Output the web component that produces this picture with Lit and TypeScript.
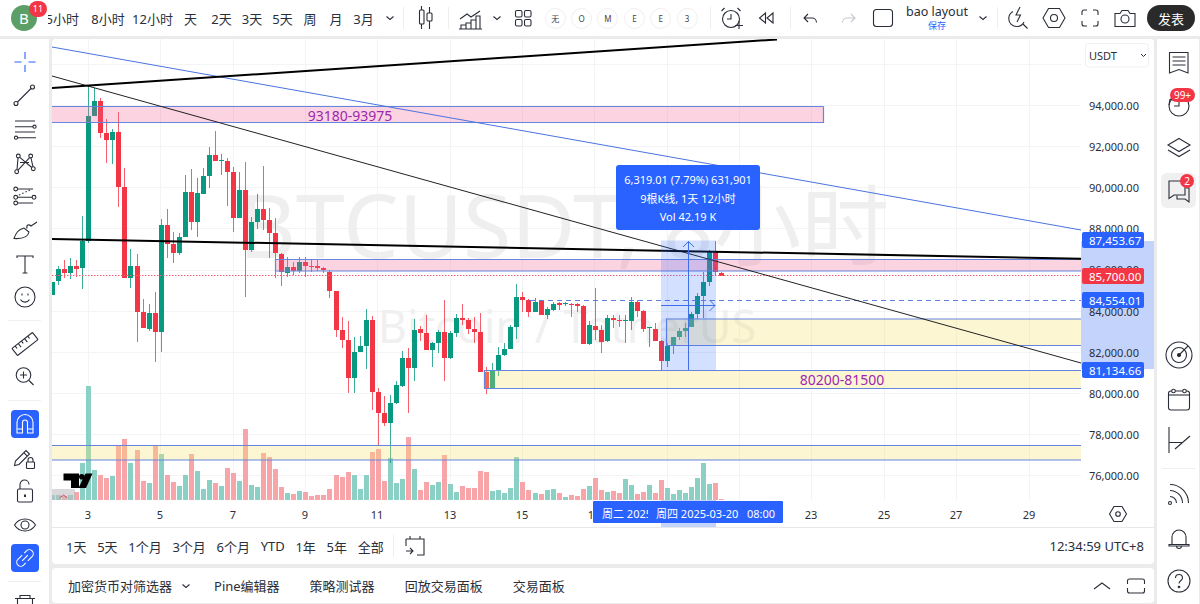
import { LitElement, html, css, svg } from 'lit';
import { customElement } from 'lit/decorators.js';

// [green?, bodyTop, bodyBottom, wickTop, wickBottom] in page pixels
const CANDLES: number[][] = [
  [1,282,295,282,295],[1,269,281,266,285],[0,269,273,260,278],[1,266,273,258,279],[0,266,269,260,277],
  [1,241,268,216,289],[1,116,241,86,243],[1,101,116,88,116],[0,101,133,98,138],[0,133,140,119,163],
  [1,132,140,129,164],[0,132,187,112,207],[0,187,278,168,278],[1,266,278,249,288],[0,266,312,254,342],
  [0,312,328,299,328],[1,313,329,304,331],[0,313,332,292,362],[1,225,332,219,352],[0,225,244,209,258],
  [0,244,253,232,263],[1,237,253,233,255],[1,192,237,175,237],[0,192,222,169,230],[1,193,222,178,237],
  [1,176,194,168,194],[1,155,176,147,188],[0,155,161,131,161],[1,160,161,154,175],[0,161,172,158,206],
  [0,172,218,167,232],[1,190,218,172,218],[0,190,250,162,297],[1,222,250,217,252],[1,209,222,194,229],
  [0,209,220,166,230],[0,220,233,208,258],[0,233,253,218,278],[0,254,272,253,286],[1,267,273,257,277],
  [0,267,271,262,275],[1,262,271,257,273],[0,262,266,257,277],[0,266,267,260,272],[0,266,268,260,271],
  [0,268,270,267,273],[0,272,291,270,298],[0,291,330,291,337],[0,330,340,317,348],[0,340,378,321,393],
  [1,352,378,337,393],[1,346,352,336,352],[1,320,346,309,369],[0,320,392,316,410],[0,392,413,388,445],
  [0,413,423,396,426],[1,403,423,395,463],[1,385,403,381,404],[1,358,386,351,387],[0,358,368,348,413],
  [1,330,368,319,381],[0,329,333,326,341],[0,333,350,315,350],[1,343,350,342,367],[1,332,343,330,353],
  [0,332,358,300,381],[1,333,358,331,359],[1,318,333,314,337],[0,318,320,304,325],[0,320,329,318,334],
  [0,329,332,317,343],[0,332,372,313,372],[0,372,389,367,394],[1,371,389,363,389],[1,355,370,347,376],
  [1,349,355,343,356],[1,327,349,325,349],[1,297,327,284,339],[0,297,300,292,312],[0,300,312,299,317],
  [1,302,312,298,312],[0,301,315,300,315],[1,309,315,307,319],[1,304,310,302,311],[0,303,305,302,310],
  [1,303,304,302,306],[0,304,305,303,317],[0,304,306,303,312],[0,306,344,305,344],[1,325,344,321,345],
  [0,326,330,288,340],[0,330,342,325,353],[1,318,341,315,342],[0,318,320,315,328],[0,320,321,315,327],
  [1,320,321,315,343],[1,302,321,297,330],[0,302,311,300,317],[0,311,329,310,332],[1,327,328,327,347],
  [0,329,341,323,341],[0,341,361,340,370],[1,346,361,343,367],[1,337,345,337,354],[1,331,337,328,340],
  [1,328,331,323,337],[1,314,327,312,327],[1,296,314,293,319],[1,282,296,272,318],[1,251,282,250,286],
  [0,252,272,241,275],[0,273,276,272,276],
];

// volume bar tops, in 3x crop units above the y=420 line
const VOL: number[] = [
  225,225,228,224,217,128,-102,150,165,174,168,78,57,130,90,183,190,78,103,165,187,197,165,102,152,208,180,
  190,197,145,160,182,28,195,202,100,112,148,200,218,221,213,215,228,226,225,207,165,170,155,166,208,165,95,
  88,182,115,188,177,52,148,210,187,195,187,105,192,215,198,205,204,153,156,212,210,218,203,111,186,210,219,
  221,210,208,220,232,226,228,207,197,174,210,216,212,218,178,196,223,215,196,218,180,205,223,209,218,200,
  175,128,191,190,237,
];

const GRID_X = [88, 160, 233, 305, 377, 450, 522, 594, 667, 739, 811, 884, 956, 1029];
const GRID_Y = [64, 105, 146, 187, 228, 270, 311, 352, 393, 434, 475];
const PRICES: [string, number][] = [
  ['94,000.00', 105], ['92,000.00', 146], ['90,000.00', 187], ['88,000.00', 228], ['86,000.00', 269],
  ['84,000.00', 311], ['82,000.00', 352], ['80,000.00', 393], ['78,000.00', 434], ['76,000.00', 475],
];
const DAYS: [string, number][] = [
  ['3', 88], ['5', 160], ['7', 233], ['9', 305], ['11', 377], ['13', 450], ['15', 522], ['17', 594],
  ['23', 811], ['25', 884], ['27', 956], ['29', 1029],
];

const xOf = (i: number) => Math.round(52.1 + 6.03 * i);

const ICONS: Record<string, unknown> = {
  cross: svg`<path d="M3.5 14h7M17.5 14h7M14 4v7M14 17v7"/>`,
  line: svg`<circle cx="5" cy="21.5" r="2"/><circle cx="21.5" cy="5" r="2"/><path d="M6.5 20L20 6.5"/>`,
  fib: svg`<path d="M4 6h20M4 11.7h18M4 17h20M7 22.7h18"/><circle cx="23.5" cy="11.7" r="1.6"/><circle cx="5" cy="22.7" r="1.6"/>`,
  pattern: svg`<circle cx="7.3" cy="7" r="1.9"/><circle cx="19.7" cy="7" r="1.9"/><circle cx="5.7" cy="22.7" r="1.9"/><circle cx="22.3" cy="19.7" r="1.9"/><path d="M7 9L6 20.8M8.8 8.3L20.8 18.5M18.6 8.6L7 21.2M20 9L22 17.8M9 13.5h9"/>`,
  fibch: svg`<circle cx="4.7" cy="7" r="1.9"/><circle cx="4.7" cy="15.3" r="1.9"/><circle cx="4.7" cy="21" r="1.9"/><circle cx="23" cy="15.3" r="1.9"/><path d="M6.6 7H22M6.6 15.3H21M6.6 21H22"/><path d="M8 13l11-5" stroke-dasharray="1.5 2"/>`,
  brush: svg`<path d="M3 22.5C5 17 7 13.5 13 12l5 4c-1 5-7 7-15 6.500z"/><path d="M16 12.500c-1-4 2-4.500 4-2.500l6-4"/>`,
  text: svg`<path d="M6 8V6h16v2M14 6v17M11.500 23h5"/>`,
  smile: svg`<circle cx="14" cy="14" r="10"/><path d="M9.500 16.500c2 3.500 7 3.500 9 0"/><path d="M11 10.500v2M17 10.500v2"/>`,
  ruler: svg`<g transform="rotate(-38 14 14)"><rect x="1" y="9.500" width="26" height="9" rx="0.500"/><path d="M5 9.500v3M9 9.500v4.500M13 9.500v3M17 9.500v4.500M21 9.500v3"/></g>`,
  zoom: svg`<circle cx="12.500" cy="12" r="7.300"/><path d="M12.500 8.500v7M9 12h7M18 17.500l4.500 4.500"/>`,
  magnet: svg`<path d="M6 23V12.500a8 8 0 0 1 16 0V23h-5.500V12.500a2.500 2.500 0 0 0-5 0V23zM6 19h5.500M16.500 19H22"/>`,
  pencil: svg`<path d="M3.500 21.500l1-4.500L15 6.500l3.500 3.500L8 20.500zM12.800 8.700l3.500 3.500"/><rect x="15.500" y="18" width="8" height="6.500" rx="0.800"/><path d="M17 18v-2a2.500 2.500 0 0 1 5 0v2"/>`,
  lock: svg`<rect x="6.500" y="12" width="15" height="13" rx="1.500"/><path d="M9 12V7.500a4.500 4.500 0 0 1 9 0"/><path d="M14 17.500v2.500" stroke-width="2"/>`,
  eye: svg`<path d="M3.500 14c5-8 16-8 21 0-5 8-16 8-21 0z"/><circle cx="14" cy="14" r="4"/>`,
  link: svg`<g transform="rotate(-45 14 14)"><path d="M14 10H8a4 4 0 0 0 0 8h3M14 18h6a4 4 0 0 0 0-8h-3"/><path d="M10 14h8"/></g>`,
  trash: svg`<path d="M9 7V4.500h10V7M4 7.500h20M6.500 8v16h15V8"/>`,
  watch: svg`<path d="M4.500 25V4.500H23V25l-9-3.500zM7.500 9h13M7.500 13h13M7.500 17h13"/>`,
  history: svg`<path d="M5 8l-1 6M5 8l5 2"/><circle cx="14" cy="15" r="10"/><path d="M14 10v5h-5"/>`,
  layers: svg`<path d="M14 4.500l11 6.500-11 6.500L3 11zM3 16l11 6.500L25 16"/>`,
  chat: svg`<path d="M4 5h16v14H9l-5 3.500z"/><path d="M21 12h3v14l-4-3H12v-3.500"/>`,
  gauge: svg`<circle cx="14" cy="14" r="13"/><circle cx="14" cy="14" r="7.500"/><circle cx="14" cy="14" fill="#222" r="1.500"/><path d="M14 14l9-9"/>`,
  calendar: svg`<rect x="3.500" y="5" width="21" height="19" rx="2.500"/><path d="M3.500 9h21"/><circle cx="8.500" cy="5" r="1.800" fill="#fff"/><circle cx="19.500" cy="5" r="1.800" fill="#fff"/>`,
  strat: svg`<path d="M4 1v26M4 16.500h13M10 23l15-13"/>`,
  rss: svg`<circle cx="5" cy="22" r="1.500"/><path d="M5 15.500a6.500 6.500 0 0 1 6.500 6.500M5 9.500a12.500 12.500 0 0 1 12.500 12.500M5 3.500A18.500 18.500 0 0 1 23.500 22"/>`,
  bell: svg`<path d="M7 20v-7a7 7 0 0 1 14 0v7M4 20.500h20v1.500H4zM11.500 22a2.500 2.500 0 0 0 5 0"/>`,
  help: svg`<circle cx="14" cy="14" r="11"/><path d="M10.500 11a3.500 3.500 0 0 1 7 0c0 2.500-3.500 2.500-3.500 5.500"/><circle cx="14" cy="20" r="0.800"/>`,
  candle: svg`<path d="M9.500 2v4M9.500 20v5M17.500 3v6M17.500 17v8"/><rect x="7.500" y="6" width="4.500" height="14" rx="1"/><rect x="15" y="9" width="5" height="8" rx="1"/>`,
  ind: svg`<path d="M4 15l7-5 4 3 9-6"/><path d="M3 25h23M5 25v-4h5v4M10 25v-6h5v6M15 25V16h5v9M20 25v-13h4v13"/>`,
  grid: svg`<rect x="6.500" y="6.500" width="6.500" height="6.500" rx="1.500"/><rect x="15.500" y="6.500" width="6.500" height="6.500" rx="1.500"/><rect x="6.500" y="15.500" width="6.500" height="6.500" rx="1.500"/><rect x="15.500" y="15.500" width="6.500" height="6.500" rx="1.500"/>`,
  alarm: svg`<circle cx="13" cy="15" r="8.500"/><path d="M13 10v5H9M3.500 7l3-3M19.500 4l3 3M21 17v8M17 21.500h8"/>`,
  rewind: svg`<path d="M12.500 9l-6 5 6 5zM20 9l-6 5 6 5z"/>`,
  undo: svg`<path d="M10 10l-4 4 4 4M6 14h8a4.500 4.500 0 0 1 4.500 4.500"/>`,
  redo: svg`<path d="M18 10l4 4-4 4M22 14h-8a4.500 4.500 0 0 0-4.500 4.500"/>`,
  square: svg`<rect x="4.500" y="5.500" width="19" height="17" rx="3"/>`,
  bolt: svg`<path d="M16 3l-4 8h4.500l-3.500 7M9 7.500a8 8 0 1 0 11 10.500M18.500 19.500l5 5"/>`,
  hex: svg`<path d="M8.500 4.500h11L25 14l-5.500 9.500h-11L3 14z"/><circle cx="14" cy="14" r="3.500"/>`,
  full: svg`<path d="M6 11V8a2 2 0 0 1 2-2h3M17 6h3a2 2 0 0 1 2 2v3M22 17v3a2 2 0 0 1-2 2h-3M11 22H8a2 2 0 0 1-2-2v-3"/>`,
  camera: svg`<path d="M4 9.500h5l2-3h6l2 3h5v13H4z"/><circle cx="14" cy="15" r="4"/>`,
  replay: svg`<path d="M5 7h18v16h-7M5 7v7M5 19h7M9 16l3 3-3 3M9 4v3M19 4v3"/>`,
  up: svg`<path d="M6 17l8-6 8 6"/>`,
  frame: svg`<path d="M5.500 12V9a2 2 0 0 1 2-2h13a2 2 0 0 1 2 2v3M22.500 16v3a2 2 0 0 1-2 2h-13a2 2 0 0 1-2-2v-3"/>`,
  chev: svg`<path d="M10.500 12.500l3.500 3 3.500-3"/>`,
};

const icon = (name: string) => html`<svg class="ic" viewBox="0 0 28 28">${ICONS[name]}</svg>`;

// top bar items, widths are the slots of the reference's toolbar
type TopItem = { w: number; t?: string; i?: string; sep?: boolean; c?: string; dim?: boolean };
const TOP: TopItem[] = [
  { w: 24, i: 'chev' },
  { w: 3, sep: true },
  { w: 42, i: 'candle' },
  { w: 3, sep: true },
  { w: 40, i: 'ind' },
  { w: 14, i: 'chev' },
  { w: 38, i: 'grid' },
  { w: 26.4, c: '无' }, { w: 26.4, c: 'O' }, { w: 26.4, c: 'M' }, { w: 26.4, c: 'E' }, { w: 26.4, c: 'E' }, { w: 26.4, c: '3' },
  { w: 19.6, sep: true },
  { w: 24, i: 'alarm' },
  { w: 46, i: 'rewind' },
  { w: 1, sep: true },
  { w: 42, i: 'undo' },
  { w: 28, i: 'redo', dim: true },
  { w: 44, i: 'square' },
];
const TOP_END: TopItem[] = [
  { w: 28, i: 'chev' },
  { w: 1, sep: true },
  { w: 40, i: 'bolt' },
  { w: 32, i: 'hex' },
  { w: 40, i: 'full' },
  { w: 30, i: 'camera' },
];
const FRAMES: [string, number][] = [
  ['5小时', 37], ['8小时', 46], ['12小时', 43], ['天', 33], ['2天', 29], ['3天', 32], ['5天', 29], ['周', 26], ['月', 26], ['3月', 29],
];

@customElement('app-root')
export class AppRoot extends LitElement {
  static override styles = css`
    :host {
      display: block;
      width: 1200px;
      height: 604px;
      overflow: hidden;
      background: #ebebec;
      font-family: "Noto Sans", "Noto Sans CJK SC", sans-serif;
      font-size: 13px;
      color: #2a2e39;
    }
    .ic {
      width: 28px;
      height: 28px;
      fill: none;
      stroke: #2a2e39;
      stroke-width: 1.100;
      flex-shrink: 0;
      overflow: visible;
    }

    .top {
      height: 36px;
      background: #fff;
      display: flex;
      align-items: center;
      position: relative;
    }
    .avatar-wrap {
      width: 48px;
      height: 36px;
      flex-shrink: 0;
      position: relative;
    }
    .avatar {
      position: absolute;
      left: 11px;
      top: 5px;
      width: 26px;
      height: 26px;
      border-radius: 50%;
      background: #5c9f66;
      color: #fff;
      font-size: 15px;
      display: flex;
      align-items: center;
      justify-content: center;
    }
    .badge-11 {
      position: absolute;
      left: 29px;
      top: 1px;
      width: 18px;
      height: 16px;
      border-radius: 8px;
      background: #f23645;
      color: #fff;
      font-size: 9px;
      line-height: 16px;
      text-align: center;
    }
    .slot {
      height: 36px;
      flex-shrink: 0;
      display: flex;
      align-items: center;
      justify-content: center;
      overflow: hidden;
      white-space: nowrap;
    }
    .slot.first {
      justify-content: flex-end;
      padding-right: 6px;
      box-sizing: border-box;
    }
    .slot.dim .ic { stroke: #c4c7cf; }
    .sep-v {
      width: 1px;
      height: 22px;
      background: #eeeeef;
    }
    .circle {
      width: 21px;
      height: 21px;
      border-radius: 50%;
      border: 1px solid #efefef;
      box-sizing: border-box;
      font-size: 8px;
      line-height: 19px;
      text-align: center;
      color: #444;
    }
    .layout {
      width: 64px;
      flex-shrink: 0;
      text-align: center;
      line-height: 1;
      white-space: nowrap;
    }
    .layout-name { font-size: 12.500px; line-height: 17px; margin-top: -3px; }
    .layout-save { font-size: 9px; line-height: 11px; color: #2962ff; }
    .publish {
      margin-left: 7px;
      width: 48px;
      height: 26px;
      border-radius: 13px;
      background: #2a2a2a;
      color: #fff;
      display: flex;
      align-items: center;
      justify-content: center;
      font-size: 13px;
    }

    .main {
      display: flex;
      gap: 3px;
      height: 565px;
      margin-top: 3px;
    }
    .left {
      width: 49px;
      background: #fff;
      display: flex;
      flex-direction: column;
      align-items: center;
      padding-top: 6.200px;
      box-sizing: border-box;
      overflow: hidden;
      flex-shrink: 0;
    }
    .tool {
      height: 33.600px;
      width: 100%;
      display: flex;
      align-items: center;
      justify-content: center;
      flex-shrink: 0;
    }
    .tool .ic.blue { stroke: #2962ff; }
    .on {
      width: 28px;
      height: 28px;
      background: #2962ff;
      border-radius: 4px;
      display: flex;
    }
    .on .ic { stroke: #fff; }
    .sep-h {
      width: 33px;
      height: 1px;
      background: #efefef;
      margin: 6px 0;
      flex-shrink: 0;
    }

    .center {
      width: 1102px;
      display: flex;
      flex-direction: column;
      gap: 4px;
    }
    .chart {
      height: 525px;
      background: #fff;
      border-radius: 4px;
      overflow: hidden;
    }
    .chart svg.plot {
      display: block;
      width: 1102px;
      height: 488px;
      font-family: "Noto Sans", "Noto Sans CJK SC", sans-serif;
    }
    .gridl { stroke: #f3f4f6; stroke-width: 1; }
    .wm { fill: #efeff0; font-size: 88px; text-anchor: middle; dominant-baseline: central; }
    .wm2 { fill: #f0f0f1; font-size: 45px; text-anchor: middle; dominant-baseline: central; }
    .zone { font-size: 14px; fill: #9c27b0; text-anchor: middle; dominant-baseline: central; }
    .tick { font-size: 11px; fill: #2a2e39; dominant-baseline: central; }
    .day { font-size: 11px; fill: #2a2e39; text-anchor: middle; dominant-baseline: central; }
    .lab { font-size: 11.500px; fill: #fff; dominant-baseline: central; }
    .tip { font-size: 11px; fill: #fff; text-anchor: middle; dominant-baseline: central; }
    .tip.start { text-anchor: start; }
    .usdt { font-size: 11px; fill: #2a2e39; dominant-baseline: central; }
    .crisp { shape-rendering: crispEdges; }

    .range {
      height: 37px;
      border-top: 1px solid #e8e8ea;
      box-sizing: border-box;
      display: flex;
      align-items: center;
      padding: 0 10px 0 14px;
      gap: 10.700px;
    }
    .range-sep { width: 1px; height: 22px; background: #eeeeef; margin-left: -1px; }
    .range .ic { margin-left: -4px; }
    .clock { margin-left: auto; }

    .tabs {
      height: 35px;
      background: #fff;
      border-radius: 4px;
      display: flex;
      align-items: center;
      padding: 0 4px 0 16px;
      gap: 30px;
    }
    .tabs .first { display: flex; align-items: center; }
    .tabs .first .ic { margin: 0 -16px 0 0; }
    .tabs .end { margin-left: auto; display: flex; gap: 6px; }

    .right {
      width: 42px;
      background: #fff;
      display: flex;
      flex-direction: column;
      align-items: center;
      overflow: hidden;
      position: relative;
      flex-shrink: 0;
    }
    .rt {
      width: 35px;
      height: 35px;
      margin-left: 1px;
      border-radius: 6px;
      display: flex;
      align-items: center;
      justify-content: center;
      flex-shrink: 0;
      position: relative;
    }
    .rt.active { background: #f0f0f1; }
    .r-list { margin-top: 5.500px; }
    .r-gap-10 { margin-top: 10px; }
    .r-gap-8 { margin-top: 8px; }
    .r-gap-7 { margin-top: 7px; }
    .r-gap-5 { margin-top: 5px; }
    .r-gap-131 { margin-top: 130px; }
    .r-sep { width: 33px; height: 1px; background: #efefef; margin: 10px 0 9px; flex-shrink: 0; }
    .pill {
      position: absolute;
      background: #f23645;
      color: #fff;
      font-size: 10px;
      line-height: 14px;
      text-align: center;
      border-radius: 7px;
    }
    .p99 { left: 9px; top: 0.500px; width: 25px; height: 14px; }
    .p2 { left: 19px; top: 1px; width: 14px; height: 14px; }
  `;

  private plot() {
    return svg`
      ${GRID_X.map((x) => svg`<line class="gridl crisp" x1=${x} x2=${x} y1="39" y2="500"/>`)}
      ${GRID_Y.map((y) => svg`<line class="gridl crisp" x1="52" x2="1081" y1=${y} y2=${y}/>`)}
      <text class="wm" x="564" y="224">BTCUSDT, 8小时</text>
      <text class="wm2" x="567" y="325">Bitcoin / TetherUS</text>
      ${VOL.map((z, i) => {
        const top = 420 + z / 3;
        const col = CANDLES[i][0] ? '#8ad0c4' : '#f8a5a9';
        return svg`<rect class="crisp" x=${xOf(i) - 2} y=${top} width="5" height=${500 - top} fill=${col}/>`;
      })}
      ${CANDLES.map(([g, t, b, hi, lo], i) => {
        const col = g ? '#089981' : '#f23645';
        const x = xOf(i);
        return svg`<rect class="crisp" x=${x} y=${hi} width="1" height=${lo - hi} fill=${col} opacity="0.8"/>
          <rect class="crisp" x=${x - 2} y=${t} width="5" height=${Math.max(b - t, 1)} fill=${col}/>`;
      })}
      ${this.drawings()}
      ${this.measure()}
      ${this.axis()}
      ${this.logo()}
    `;
  }

  private box(x: number, y1: number, y2: number, w: number, fill: string) {
    return svg`
      <rect x=${x} y=${y1} width=${w} height=${y2 - y1} fill=${fill}/>
      <path d="M${x + w} ${y1}H${x}V${y2}H${x + w}${x + w < 1081 ? `V${y1}` : ''}" fill="none" stroke="#6785de" stroke-width="1.200"/>`;
  }

  private drawings() {
    const pink = 'rgba(240,98,146,0.28)';
    const yellow = 'rgba(250,225,110,0.3)';
    return svg`
      ${this.box(49, 106.500, 122.500, 774.500, pink)}
      <text class="zone" x="350" y="115">93180-93975</text>
      ${this.box(275.500, 259.500, 271, 805.500, pink)}
      ${this.box(666.500, 319, 345.500, 414.500, yellow)}
      ${this.box(484.500, 370.500, 388.500, 596.500, yellow)}
      <text class="zone" x="842" y="379">80200-81500</text>
      ${this.box(49, 445.500, 460, 1032, yellow)}
      <line x1="52" x2="1081" y1="275.500" y2="275.500" stroke="#f4606d" stroke-width="1" stroke-dasharray="1.500 1.500"/>
      <line x1="530" x2="1081" y1="300.500" y2="300.500" stroke="#5f7fdc" stroke-width="1.200" stroke-dasharray="5 4"/>
      <line x1="52" y1="47" x2="1081" y2="230" stroke="#4a74e0" stroke-width="1"/>
      <line x1="52" y1="76" x2="1081" y2="363" stroke="#222" stroke-width="1"/>
      <line x1="52" y1="88" x2="777" y2="39.500" stroke="#000" stroke-width="2"/>
      <line x1="52" y1="239" x2="1081" y2="258.700" stroke="#000" stroke-width="2"/>`;
  }

  private measure() {
    return svg`
      <rect x="661" y="240.500" width="55" height="129.500" fill="rgba(41,98,255,0.2)"/>
      <path d="M688.500 370V241.500M683 247l5.500-5.500 5.500 5.500M661 305.500h54M709.500 300l5.500 5.500-5.500 5.500" fill="none" stroke="#3f6fe6" stroke-width="1"/>
      <rect x="616" y="165" width="144" height="65" rx="3" fill="#2962ff"/>
      <text class="tip" x="688" y="179.500">6,319.01 (7.79%) 631,901</text>
      <text class="tip" x="688" y="198">9根K线, 1天 12小时</text>
      <text class="tip" x="688" y="216.500">Vol 42.19 K</text>`;
  }

  private axis() {
    const labels: [string, number, string][] = [
      ['87,453.67', 240, '#2962ff'],
      ['85,700.00', 276, '#f23645'],
      ['84,554.01', 300, '#2962ff'],
      ['81,134.66', 370, '#2962ff'],
    ];
    return svg`
      <rect x="1081" y="39" width="73" height="488" fill="#fff"/>
      <rect x="1081" y="241" width="73" height="128" fill="#c4d3fb"/>
      ${PRICES.map(([t, y]) => svg`<text class="tick" x="1089" y=${y}>${t}</text>`)}
      ${labels.map(([t, y, c]) => svg`
        <rect x="1082" y=${y - 8} width="62" height="16" rx="2" fill=${c}/>
        <text class="lab" x="1089" y=${y}>${t}</text>`)}
      <rect x="1085.500" y="43.500" width="63" height="23.500" rx="3" fill="#fff" stroke="#f0f1f4"/>
      <text class="usdt" x="1089" y="55.500">USDT</text>
      <path d="M1141 54l2.500 2.500 2.500-2.500" fill="none" stroke="#2a2e39"/>
      <rect x="661" y="500" width="55" height="27" fill="#c4d3fb"/>
      ${DAYS.map(([t, x]) => svg`<text class="day" x=${x} y="514">${t}</text>`)}
      <rect x="593" y="501" width="190" height="22" rx="1" fill="#2962ff"/>
      <clipPath id="first-date"><rect x="600" y="501" width="48" height="22"/></clipPath>
      <text class="tip start" x="602" y="513" clip-path="url(#first-date)">周二 2025-03-18</text>
      <text class="tip start" x="656" y="513">周四 2025-03-20</text>
      <text class="tip start" x="747" y="513">08:00</text>
      <g transform="translate(1108 504)" fill="none" stroke="#2a2e39" stroke-width="1.100">
        <path d="M6 3h8l4.500 7.500-4.500 7.500H6L1.500 10.500z" transform="translate(0 -0.500)"/>
        <circle cx="10" cy="10" r="2.300"/>
      </g>`;
  }

  private logo() {
    return svg`
      <rect x="52" y="489" width="23" height="11" fill="rgba(190,190,195,0.6)"/>
      <path d="M59.500 498l4-3 4 3" fill="none" stroke="#e0475a" stroke-width="1"/>
      <path d="M63.500 473.500h15.500v14.500h-8v-7.500h-7.500z" fill="#000"/>
      <circle cx="81.800" cy="476.800" r="2.800" fill="#000"/>
      <path d="M85.500 473.500h7l-6.500 14.500h-7.500z" fill="#000"/>`;
  }

  private slot(it: TopItem, first = false) {
    let inner: unknown = it.t ?? '';
    if (it.sep) inner = html`<span class="sep-v"></span>`;
    else if (it.i) inner = icon(it.i);
    else if (it.c) inner = html`<span class="circle">${it.c}</span>`;
    return html`<div class="slot ${first ? 'first' : ''} ${it.dim ? 'dim' : ''}" style="width:${it.w}px">${inner}</div>`;
  }

  override render() {
    return html`
      <div class="top">
        <div class="avatar-wrap">
          <div class="avatar">B</div>
          <div class="badge-11">11</div>
        </div>
        ${FRAMES.map(([t, w], i) => this.slot({ t, w }, i === 0))}
        ${TOP.map((it) => this.slot(it))}
        <div class="layout">
          <div class="layout-name">bao layout</div>
          <div class="layout-save">保存</div>
        </div>
        ${TOP_END.map((it) => this.slot(it))}
        <div class="publish">发表</div>
      </div>
      <div class="main">
        <div class="left">
          <div class="tool"><svg class="ic blue" viewBox="0 0 28 28">${ICONS.cross}</svg></div>
          ${['line', 'fib', 'pattern', 'fibch', 'brush', 'text', 'smile'].map((n) => html`<div class="tool">${icon(n)}</div>`)}
          <div class="sep-h"></div>
          ${['ruler', 'zoom'].map((n) => html`<div class="tool">${icon(n)}</div>`)}
          <div class="sep-h"></div>
          <div class="tool"><div class="on">${icon('magnet')}</div></div>
          ${['pencil', 'lock', 'eye'].map((n) => html`<div class="tool">${icon(n)}</div>`)}
          <div class="tool"><div class="on">${icon('link')}</div></div>
          <div class="sep-h"></div>
          <div class="tool">${icon('trash')}</div>
        </div>
        <div class="center">
          <div class="chart">
            <svg class="plot" viewBox="52 39 1102 488">${this.plot()}</svg>
            <div class="range">
              ${['1天', '5天', '1个月', '3个月', '6个月', 'YTD', '1年', '5年', '全部'].map((t) => html`<span>${t}</span>`)}
              <span class="range-sep"></span>
              ${icon('replay')}
              <span class="clock">12:34:59 UTC+8</span>
            </div>
          </div>
          <div class="tabs">
            <span class="first">加密货币对筛选器${icon('chev')}</span>
            <span>Pine编辑器</span>
            <span>策略测试器</span>
            <span>回放交易面板</span>
            <span>交易面板</span>
            <span class="end">${icon('up')}${icon('frame')}</span>
          </div>
        </div>
        <div class="right">
          <div class="rt r-list">${icon('watch')}</div>
          <div class="rt r-gap-8">${icon('history')}<span class="pill p99">99+</span></div>
          <div class="rt r-gap-8">${icon('layers')}</div>
          <div class="rt active r-gap-7">${icon('chat')}<span class="pill p2">2</span></div>
          <div class="rt r-gap-131">${icon('gauge')}</div>
          <div class="rt r-gap-10">${icon('calendar')}</div>
          <div class="rt r-gap-5">${icon('strat')}</div>
          <div class="r-sep"></div>
          <div class="rt">${icon('rss')}</div>
          <div class="rt r-gap-8">${icon('bell')}</div>
          <div class="rt r-gap-8">${icon('help')}</div>
        </div>
      </div>
    `;
  }
}
